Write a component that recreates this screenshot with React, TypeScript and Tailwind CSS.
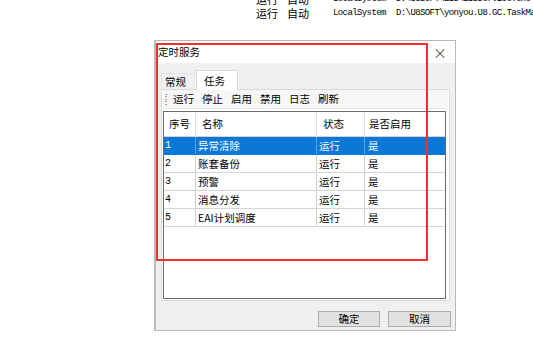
import React from 'react';

const CJK = '"Microsoft YaHei", "Noto Sans CJK SC", "Noto Sans", sans-serif';
const SONG = '"Liberation Mono", "Noto Sans CJK SC", monospace';

const rows = [
  { no: '1', name: '异常清除', state: '运行', on: '是' },
  { no: '2', name: '账套备份', state: '运行', on: '是' },
  { no: '3', name: '预警', state: '运行', on: '是' },
  { no: '4', name: '消息分发', state: '运行', on: '是' },
  { no: '5', name: 'EAI计划调度', state: '运行', on: '是' },
];

const tools = ['运行', '停止', '启用', '禁用', '日志', '刷新'];

function BackRow({ a, b, c, d }: { a: string; b: string; c: string; d: string }) {
  return (
    <div className="flex h-[14px] items-center text-[11px] leading-[14px] text-black whitespace-nowrap">
      <span className="w-[31px] shrink-0" style={{ fontFamily: CJK }}>{a}</span>
      <span className="w-[46px] shrink-0" style={{ fontFamily: CJK }}>{b}</span>
      <span className="w-[63px] shrink-0 text-[9px] tracking-[-0.6px]" style={{ fontFamily: SONG }}>{c}</span>
      <span className="shrink-0 text-[9px] tracking-[-0.6px]" style={{ fontFamily: SONG }}>{d}</span>
    </div>
  );
}

export default function App() {
  return (
    <div className="relative w-[533px] h-[340px] overflow-hidden bg-white" style={{ fontFamily: CJK }}>
      {/* background service list */}
      <div className="pl-[256px] -mt-[8px]">
        <BackRow a="运行" b="自动" c="LocalSystem" d="D:\U8SOFT\EIS\EISService.exe" />
        <BackRow a="运行" b="自动" c="LocalSystem" d="D:\U8SOFT\yonyou.U8.GC.TaskMa" />
      </div>

      {/* dialog window */}
      <div className="absolute left-[154px] top-[40px] w-[302px] h-[291px] flex flex-col border border-[#b9b9b9] border-l-[2px] border-l-[#bcbcbc] bg-[#f0f0f0] text-[10.5px]">
        <div className="h-[22px] flex items-center justify-between bg-white pl-[2px] pr-[8px] text-black">
          <span>定时服务</span>
          <span className="text-[14px] leading-none font-light text-[#222]">×</span>
        </div>

        <div className="flex-1 flex flex-col px-[5px]">
          {/* tabs */}
          <div className="flex items-end h-[26px]">
            <div className="w-[35px] h-[16px] flex items-center pl-[3px] text-black bg-[#f0f0f0] border-t border-l border-[#e3e3e3]">常规</div>
            <div className="w-[42px] h-[20px] flex items-center pl-[7px] text-black bg-white border-t border-l border-r border-[#d9d9d9] -mb-px relative z-10">任务</div>
          </div>

          {/* tab panel */}
          <div className="h-[212px] bg-white border border-[#d9d9d9] flex flex-col">
            <div className="h-[19px] mx-px flex items-center bg-[#f6f6f6] border-b border-[#e6e6e6] rounded-r-[2px] text-black">
              <div className="ml-[2px] mr-[6px] h-[13px] w-[2px] flex flex-col justify-between py-px">
                {[0, 1, 2, 3, 4].map(i => (
                  <span key={i} className="block w-[2px] h-[1px] bg-[#9a9a9a]" />
                ))}
              </div>
              <div className="flex gap-[8px]">
                {tools.map(t => <span key={t}>{t}</span>)}
              </div>
            </div>

            {/* table */}
            <div className="ml-px mt-[2px] w-[283px] h-[188px] border border-[#6b6b6b] bg-white">
              <div className="grid grid-cols-[32px_121px_48px_80px] h-[25px] border-b border-[#d5d5d5] text-black">
                <div className="pl-[5px] flex items-center border-r border-[#dcdcdc]">序号</div>
                <div className="pl-[6px] flex items-center border-r border-[#dcdcdc]">名称</div>
                <div className="pl-[6px] flex items-center border-r border-[#dcdcdc]">状态</div>
                <div className="pl-[4px] flex items-center">是否启用</div>
              </div>
              {rows.map((r, i) => {
                const sel = i === 0;
                return (
                  <div
                    key={r.no}
                    className={`grid grid-cols-[32px_121px_48px_80px] h-[18px] border-b ${sel ? 'bg-[#0a78d7] text-white border-[#0a78d7]' : 'text-black border-[#d5d5d5]'}`}
                  >
                    <div className={`pl-[1px] flex items-center text-[10px] border-r ${sel ? 'border-[#5aa3e3]' : 'border-[#cfcfcf]'}`} style={{ fontFamily: SONG }}>{r.no}</div>
                    <div className={`pl-[2px] flex items-center border-r ${sel ? 'border-[#5aa3e3]' : 'border-[#cfcfcf]'}`}>{r.name}</div>
                    <div className={`pl-[2px] flex items-center border-r ${sel ? 'border-[#5aa3e3]' : 'border-[#cfcfcf]'}`}>{r.state}</div>
                    <div className="pl-[3px] flex items-center">{r.on}</div>
                  </div>
                );
              })}
            </div>
          </div>

          {/* buttons */}
          <div className="flex justify-end gap-[8px] mt-[10px] -mr-[1px]">
            <button className="w-[62px] h-[16px] flex items-center justify-center bg-[#e1e1e1] border border-[#adadad] text-black">确定</button>
            <button className="w-[63px] h-[16px] flex items-center justify-center bg-[#e1e1e1] border border-[#adadad] text-black">取消</button>
          </div>
        </div>
      </div>

      {/* red annotation rectangle */}
      <div className="absolute left-[156px] top-[43px] w-[272px] h-[218px] border-2 border-[#f03030] pointer-events-none" />
    </div>
  );
}
